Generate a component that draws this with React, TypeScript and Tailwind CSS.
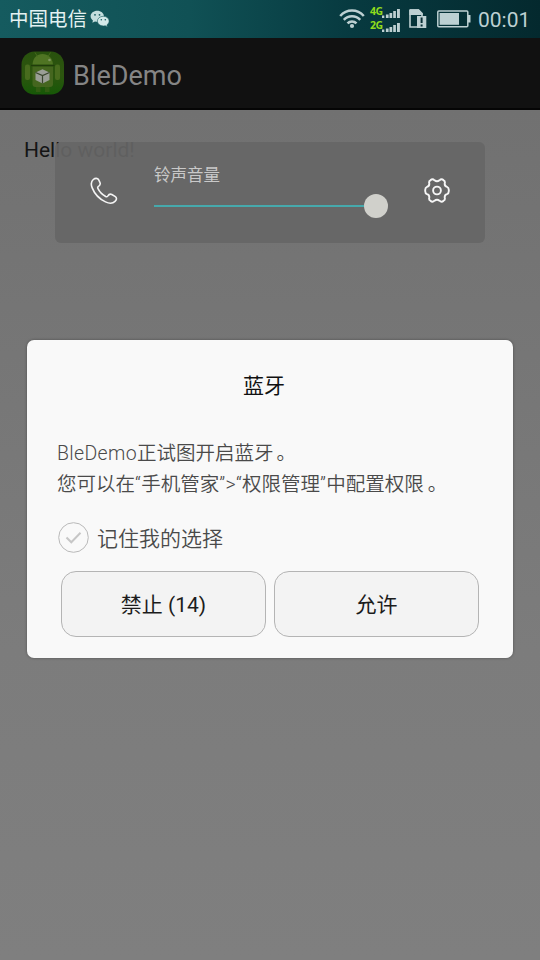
const ROBOTO = "font-[Roboto,'Noto_Sans_CJK_SC',sans-serif]";

function WeChatIcon() {
  return (
    <svg width="20" height="18" viewBox="0 0 20 18" className="ml-[3px]">
      <path d="M7.3.7C3.6.7.6 3.100.6 6.200c0 1.700.9 3.200 2.300 4.200L2.400 12.800l2.600-1.400c.8.2 1.600.3 2.500.3C11 11.500 13.900 9.200 13.900 6.200 13.900 3.100 10.900.7 7.300.7z" fill="#c3dede" />
      <circle cx="5" cy="4.800" r=".9" fill="#155a5e" />
      <circle cx="9.500" cy="4.800" r=".9" fill="#155a5e" />
      <path d="M13.300 6.300c-3.300 0-5.900 2.100-5.900 4.800s2.600 4.900 5.900 4.900c.7 0 1.300-.1 1.900-.3l2.300 1.200-.6-2c1.300-.9 2.200-2.200 2.200-3.800 0-2.700-2.500-4.800-5.800-4.800z" fill="#d3e9e9" stroke="#155a5e" strokeWidth=".6" />
      <circle cx="11.300" cy="9.800" r=".8" fill="#155a5e" />
      <circle cx="15.300" cy="9.800" r=".8" fill="#155a5e" />
    </svg>
  );
}

function WifiIcon() {
  return (
    <svg width="26" height="20" viewBox="0 0 26 20" fill="none" stroke="#bdd0d2" strokeWidth="2.500">
      <path d="M1.200 7C7.700-.3 18.300-.3 24.800 7" />
      <path d="M4.800 10.900c4.500-4.900 11.900-4.900 16.400 0" />
      <path d="M8.500 14.400c2.500-2.700 6.500-2.700 9 0" />
      <circle cx="13" cy="17" r="2.100" fill="#bdd0d2" stroke="none" />
    </svg>
  );
}

function SignalRow({ label }: { label: string }) {
  return (
    <div className="flex h-[14px] items-end">
      <span className="w-[12px] self-start font-['Open_Sans',sans-serif] text-[10.500px] leading-[14px] font-bold tracking-[-0.5px] text-[#8fdc1c]">{label}</span>
      <svg width="18" height="10" viewBox="0 0 18 10" fill="#bdd0d2">
        <rect x="0" y="7.500" width="2.300" height="2.500" />
        <rect x="3.900" y="6.500" width="2.700" height="3.500" />
        <rect x="7.500" y="5" width="2.700" height="5" />
        <rect x="11.200" y="3" width="2.700" height="7" />
        <rect x="15" y="1" width="2.900" height="9" />
      </svg>
    </div>
  );
}

function SimAlertIcon() {
  return (
    <svg width="18" height="20" viewBox="0 0 18 20">
      <path d="M1 1h8.500L13 4.500V8M8 18H1V1" fill="none" stroke="#bdd0d2" strokeWidth="1.600" />
      <path d="M.3.300h9.400l4 4V6H.3z" fill="#bdd0d2" />
      <rect x="8" y="7" width="9.300" height="12" fill="#bdd0d2" />
      <path d="M12.600 8.500v5.500M12.600 15.400v2" stroke="#082e34" strokeWidth="2" />
    </svg>
  );
}

function BatteryIcon() {
  return (
    <svg width="34" height="18" viewBox="0 0 34 18">
      <rect x=".8" y="1" width="30" height="15.700" rx="1" fill="none" stroke="#bdd0d2" strokeWidth="1.500" />
      <rect x="2.600" y="3" width="19.400" height="11.800" fill="#bdd0d2" />
      <rect x="31" y="5" width="2.500" height="7.500" fill="#bdd0d2" />
    </svg>
  );
}

function AppIcon() {
  return (
    <svg width="44" height="44" viewBox="0 0 44 44">
      <defs>
        <linearGradient id="leaf" x1="0" y1="0" x2="0" y2="1">
          <stop offset="0" stopColor="#28510d" />
          <stop offset=".55" stopColor="#2d550f" />
          <stop offset="1" stopColor="#165807" />
        </linearGradient>
      </defs>
      <rect x=".5" y=".5" width="42.500" height="43" rx="13" fill="url(#leaf)" />
      <path d="M11.500 13.500C12 6.500 16 3 21.500 3S31.500 6.500 32 13.500z" fill="#4f7423" />
      <path d="M14 1.500l2.500 4M29.500 1.500l-2.500 4" stroke="#456a1c" strokeWidth="1" />
      <circle cx="28.500" cy="9" r="1.300" fill="#809762" />
      <path d="M11.500 15.500h20.500V33q0 3-3 3H14.500q-3 0-3-3z" fill="#45661f" />
      <rect x="4" y="13.500" width="5" height="15.500" rx="2" fill="#486b1e" />
      <rect x="34" y="13.500" width="5" height="15.500" rx="2" fill="#486b1e" />
      <path d="M10 14.500h23.500" stroke="#203c0b" strokeWidth="1.200" />
      <path d="M15 36h4.500v5H15zM24 36h4.500v5H24z" fill="#315c12" />
      <path d="M14.500 21.500l7-3.300 7 3.300v7.500l-7 3.500-7-3.500z" fill="#9a9e96" />
      <path d="M14.500 21.500l7 3 7-3M21.500 24.500v8" fill="none" stroke="#39452d" strokeWidth="1.200" />
    </svg>
  );
}

function StatusBar() {
  return (
    <header className="flex h-[38px] items-center bg-[linear-gradient(90deg,#155b5f_0%,#105155_35%,#073a40_65%,#04292e_100%)] pr-[10px] pl-[9px]">
      <span className="pt-[2px] text-[19.500px] leading-[36px] text-[#e4f2f2]">中国电信</span>
      <WeChatIcon />
      <div className="ml-auto flex items-center text-[#bdd0d2]">
        <WifiIcon />
        <div className="ml-[5px] flex flex-col pb-[2px]">
          <SignalRow label="4G" />
          <SignalRow label="2G" />
        </div>
        <div className="ml-[9px]"><SimAlertIcon /></div>
        <div className="ml-[10px]"><BatteryIcon /></div>
        <span className="ml-[7px] w-[52px] pt-[2px] text-[21px] leading-[36px]">00:01</span>
      </div>
    </header>
  );
}

function VolumePanel() {
  return (
    <section className="absolute top-[142px] left-[55px] flex h-[101px] w-[430px] rounded-[6px] bg-[#666]/92">
      <svg className="mt-[35px] ml-[35px]" width="28" height="29" viewBox="0 0 28 29" fill="none" stroke="#f4f4f4" strokeWidth="1.600" strokeLinejoin="round">
        <path d="M3.300 2.500C5 1.100 7.500.900 8.500 2.500L10 5.700C10.800 7.600 9.500 8.800 8.200 9.700 7.500 10.200 7.600 10.900 8 11.700 9.700 15.200 12.300 17.700 15.700 19.500 16.500 19.900 17.200 19.800 17.700 19.100 18.600 17.700 20 16.600 21.800 17.500L25 19.400C27.300 20.900 26.600 22.900 25 24.400 22.700 26.700 19.300 26.700 15.500 24.900 9.600 22.100 4.600 17 2.200 10.900.8 7.400.900 4.500 3.300 2.500z" />
      </svg>
      <div className="ml-[36px] w-[234px] pt-[22px]">
        <p className="text-[16.500px] leading-[24px] text-[#c9c9c9]">铃声音量</p>
        <div className="mt-[6px] flex items-center">
          <div className="h-[2px] flex-1 bg-[#46a9ac]" />
          <div className="size-[24px] rounded-full bg-[#d0d0cb]" />
        </div>
      </div>
      <svg className="mt-[35px] ml-[36px]" width="26" height="27" viewBox="-13 -13.500 26 27" fill="none" stroke="#f6f6f6" strokeWidth="1.900" strokeLinejoin="round">
        <path d="M-6.600-10.200Q-4.500-12.200-2.500-10.200Q0-8.200 2.500-10.200Q4.500-12.200 6.600-10.200Q8.400-9.500 7.700-7Q7.500-4.300 10-3.700Q12-3 11.800 0Q12 3 10 3.700Q7.500 4.300 7.700 7Q8.400 9.500 6.600 10.200Q4.500 12.200 2.500 10.200Q0 8.200-2.500 10.200Q-4.500 12.200-6.600 10.200Q-8.400 9.500-7.700 7Q-7.500 4.300-10 3.700Q-12 3-11.800 0Q-12-3-10-3.700Q-7.500-4.300-7.700-7Q-8.400-9.500-6.600-10.200z" />
        <circle r="3.900" />
      </svg>
    </section>
  );
}

function PermissionDialog() {
  const button = "h-[66px] flex-1 rounded-[15px] border border-[#b4b4b4] bg-[#f3f3f3] pt-[3px] text-[21px] text-[#1c1c1c]";

  return (
    <section
      role="dialog"
      className="absolute top-[340px] left-[27px] h-[318px] w-[486px] rounded-[7px] bg-[#f9f9f9] shadow-[0_0_3px_rgba(0,0,0,0.35)]"
    >
      <h2 className="mt-[30px] pr-[12px] text-center text-[21px] leading-[32px] text-[#111]">蓝牙</h2>
      <div className="mt-[36px] pl-[30px] text-[19.500px] leading-[31px] font-[350] whitespace-nowrap text-[#4a4a4a]">
        <p><span className="tracking-[0.35px]">BleDemo</span>正试图开启蓝牙<span className="ml-[3px]">。</span></p>
        <p>您可以在<span className="tracking-[0.5px]">“</span>手机管家<span className="tracking-[0.3px]">”&gt;“</span>权限管理<span className="tracking-[0.3px]">”</span>中配置权限<span className="ml-[4px]">。</span></p>
      </div>
      <div className="mt-[22px] flex h-[32px] items-center pl-[31px]">
        <svg className="mt-[-1px]" width="31" height="31" viewBox="0 0 31 31" fill="none">
          <circle cx="15.500" cy="15.500" r="14.800" stroke="#b9b9b9" />
          <path d="M8.500 15.500l4.800 4.800 9.200-9.500" stroke="#c6c6c6" strokeWidth="2" />
        </svg>
        <span className="ml-[8px] pt-[1px] text-[21px] leading-[32px] font-[350] text-[#4a4a4a]">记住我的选择</span>
      </div>
      <div className="mt-[17px] flex gap-[8px] pr-[34px] pl-[34px]">
        <button type="button" className={button}>禁止 (14)</button>
        <button type="button" className={button}>允许</button>
      </div>
    </section>
  );
}

export default function App() {
  return (
    <main className={`relative h-[960px] w-[540px] overflow-hidden bg-[linear-gradient(180deg,#717171_110px,#7c7c7c_650px,#7f7f7f_960px)] ${ROBOTO}`}>
      <StatusBar />
      <div className="flex h-[72px] items-center border-b-2 border-[#050505] bg-[#111] pl-[21px]">
        <AppIcon />
        <h1 className="ml-[8px] pt-[5px] text-[27px] leading-[36px] text-[#858585]">BleDemo</h1>
      </div>
      <p className="pt-[27px] pl-[24px] text-[21px] leading-[26px] text-[#151515]">Hello world!</p>
      <VolumePanel />
      <PermissionDialog />
    </main>
  );
}
